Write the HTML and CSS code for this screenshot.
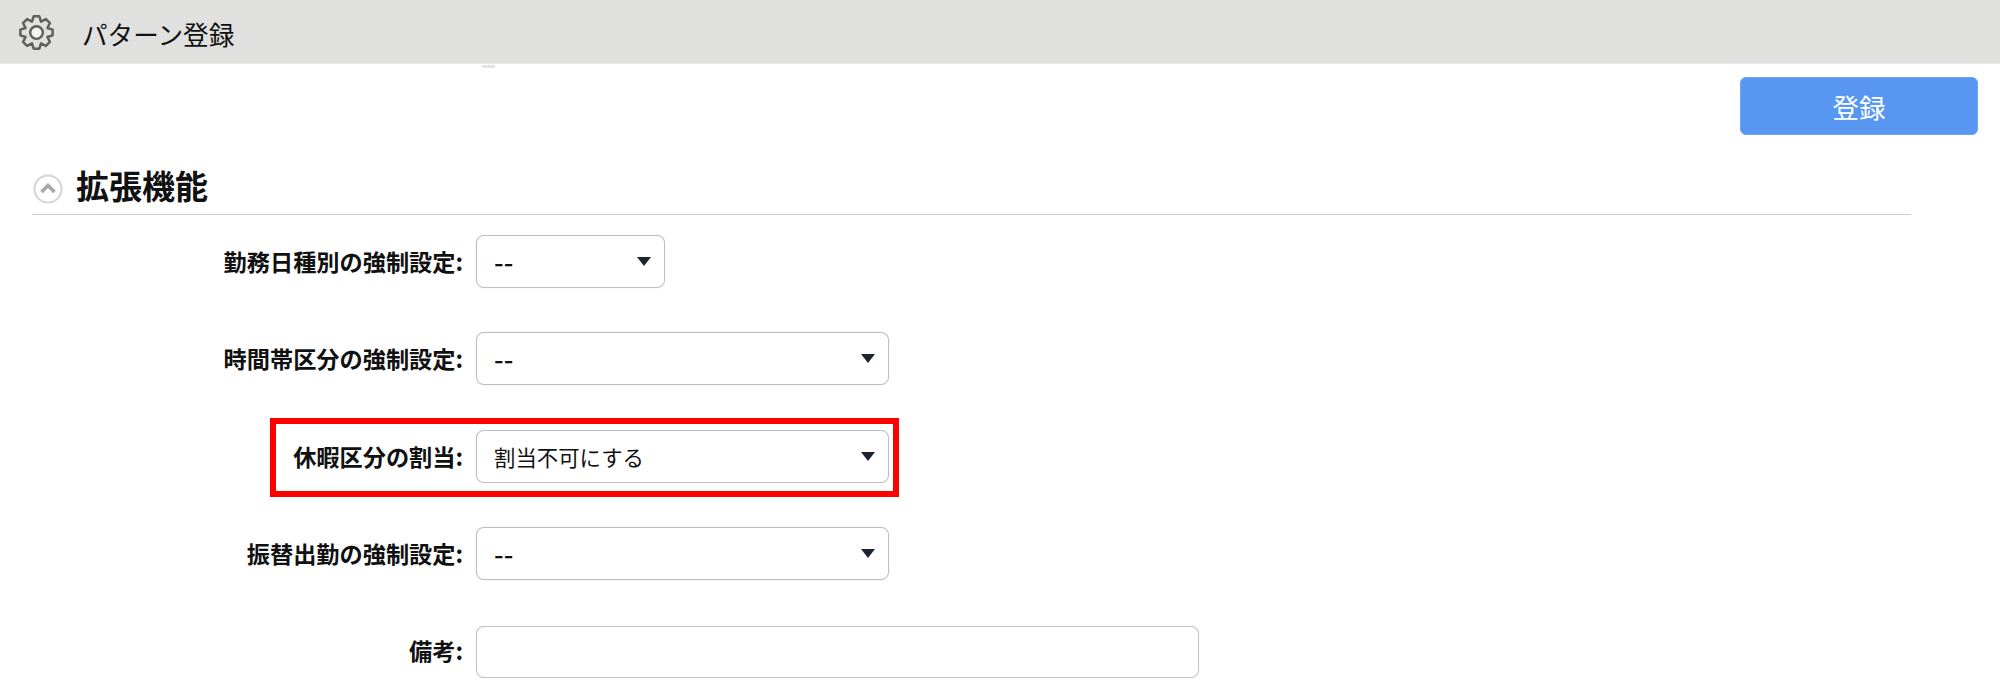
FILE: index.html
```html
<!DOCTYPE html>
<html lang="ja">
<head>
<meta charset="utf-8">
<title>パターン登録</title>
<link rel="stylesheet" href="styles.css">
</head>
<body>
<header class="topbar">
  <svg class="gear" viewBox="-20 -20 40 40" aria-hidden="true">
    <polygon class="gear-body" points="15.76,2.78 10.62,4.4 13.11,9.18 9.18,13.11 4.4,10.62 2.78,15.76 -2.78,15.76 -4.4,10.62 -9.18,13.11 -13.11,9.18 -10.62,4.4 -15.76,2.78 -15.76,-2.78 -10.62,-4.4 -13.11,-9.18 -9.18,-13.11 -4.4,-10.62 -2.78,-15.76 2.78,-15.76 4.4,-10.62 9.18,-13.11 13.11,-9.18 10.62,-4.4 15.76,-2.78"/>
    <circle class="gear-hub" r="6.2"/>
  </svg>
  <h1 class="page-title">パターン登録</h1>
</header>
<div class="toolbar">
  <button class="primary" type="button">登録</button>
</div>
<section class="section">
  <div class="section-head">
    <svg class="collapse" viewBox="0 0 30 30" aria-hidden="true">
      <circle class="collapse-ring" cx="15" cy="15" r="13.6"/>
      <path class="collapse-chevron" d="M8.5 18 L15 11.5 L21.5 18"/>
    </svg>
    <h2 class="section-title">拡張機能</h2>
  </div>
  <form class="form">
    <div class="row">
      <label class="label">勤務日種別の強制設定:</label>
      <div class="select-wrap narrow"><select class="select empty"><option>--</option></select></div>
    </div>
    <div class="row">
      <label class="label">時間帯区分の強制設定:</label>
      <div class="select-wrap"><select class="select empty"><option>--</option></select></div>
    </div>
    <div class="row marked">
      <label class="label">休暇区分の割当:</label>
      <div class="select-wrap"><select class="select"><option>割当不可にする</option></select></div>
    </div>
    <div class="row">
      <label class="label">振替出勤の強制設定:</label>
      <div class="select-wrap"><select class="select empty"><option>--</option></select></div>
    </div>
    <div class="row">
      <label class="label">備考:</label>
      <input class="text-input" type="text">
    </div>
  </form>
</section>
</body>
</html>
```
FILE: styles.css
```css
*, *::before, *::after { box-sizing: border-box; }
html, body { margin: 0; padding: 0; background: #fff; }
body {
  height: 687px;
  overflow: hidden;
  color: #111;
  font-family: "Noto Sans CJK JP", "Liberation Sans", sans-serif;
}
.topbar {
  position: relative;
  display: flex;
  align-items: center;
  height: 64px;
  padding-left: 16px;
  background: #e0e0de;
  border-bottom: 1px solid #ececea;
}
.topbar::after {
  content: "";
  position: absolute;
  left: 482px;
  top: 65px;
  width: 13px;
  height: 3px;
  background: #e4e4e4;
}
.gear { width: 41px; height: 41px; margin-top: 2px; }
.gear-body { fill: none; stroke: #5f5f5f; stroke-width: 2.4; stroke-linejoin: round; }
.gear-hub { fill: #f4f4f4; stroke: #5f5f5f; stroke-width: 2.4; }
.page-title { margin: 4px 0 0 25px; font-size: 25.6px; font-weight: 400; line-height: 1; }
.toolbar { display: flex; justify-content: flex-end; padding: 13px 22px 0 0; }
.primary {
  width: 238px;
  height: 58px;
  border: 1px solid #6aa4f4;
  border-radius: 6px;
  background: #5797f2;
  color: #fff;
  font: 400 26.5px "Noto Sans CJK JP", sans-serif;
}
.section { width: 1879px; margin: 0 0 0 32px; }
.section-head {
  display: flex;
  align-items: center;
  height: 80px;
  padding-top: 26px;
  border-bottom: 1px solid #cfcfcf;
}
.collapse { width: 30px; height: 30px; flex: none; margin: 2px 0 0 1px; }
.collapse-ring { fill: #fff; stroke: #d4d4d4; stroke-width: 2; }
.collapse-chevron { fill: none; stroke: #a8a8a8; stroke-width: 3.6; }
.section-title { margin: 0 0 4px 13px; font-size: 33px; font-weight: 700; line-height: 1; }
.form { display: flex; flex-direction: column; gap: 44.4px; padding-top: 20px; }
.row { position: relative; display: flex; align-items: center; height: 53px; }
.marked::after {
  content: "";
  position: absolute;
  left: 238px;
  top: -12px;
  width: 629px;
  height: 79px;
  border: 6px solid #ff0000;
  pointer-events: none;
}
.label { width: 431px; text-align: right; font-size: 23.2px; font-weight: 700; line-height: 1; white-space: nowrap; }
.select-wrap { position: relative; width: 413px; height: 53px; margin-left: 13px; }
.select-wrap.narrow { width: 189px; }
.select-wrap::after {
  content: "";
  position: absolute;
  right: 14px;
  top: 22px;
  border-left: 7px solid transparent;
  border-right: 7px solid transparent;
  border-top: 9px solid #1c2430;
  pointer-events: none;
}
.select {
  appearance: none;
  width: 100%;
  height: 100%;
  padding: 0 40px 0 17px;
  border: 1px solid #c0c0c0;
  border-radius: 8px;
  box-shadow: 0 0 1px #cccccc;
  background: #fff;
  color: #111;
  font: 400 21.4px "Noto Sans CJK JP", sans-serif;
}
.select.empty { font-size: 27px; font-weight: 500; }
.text-input {
  align-self: flex-end;
  width: 723px;
  height: 52px;
  margin-left: 13px;
  border: 1px solid #c4c4c4;
  border-radius: 8px;
  box-shadow: 0 0 1px #cccccc;
  background: #fff;
}
```
